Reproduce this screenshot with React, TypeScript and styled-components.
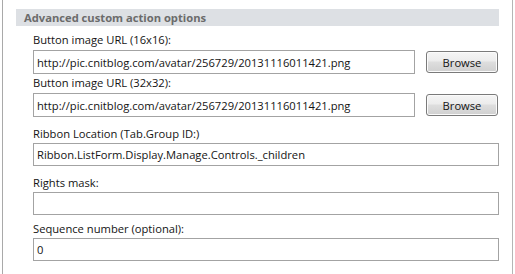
import React from "react";
import styled, { createGlobalStyle } from "styled-components";

const Global = createGlobalStyle`
  html, body { margin: 0; padding: 0; background: #ffffff; }
  body { font-family: "Open Sans", "Noto Sans", sans-serif; }
`;

const Page = styled.div`
  width: 515px;
  height: 274px;
  background: #ffffff;
  overflow: hidden;
`;

const Frame = styled.div`
  margin-left: 2px;
  width: 511px;
  height: 274px;
  border-left: 1px solid #a9a9a9;
  border-right: 1px solid #b5b5b5;
  padding-top: 9px;
  box-sizing: border-box;
`;

const Header = styled.div`
  margin: 0 13px;
  height: 17px;
  background: #dde0e4;
  color: #6b6b6b;
  font-weight: 700;
  font-size: 11.2px;
  line-height: 17px;
  padding-left: 8px;
`;

const Body = styled.div`
  padding-left: 30px;
  padding-right: 13px;
  display: flex;
  flex-direction: column;
`;

const Field = styled.div<{ $top: number; $gap: number }>`
  margin-top: ${(p) => p.$top}px;
  display: flex;
  flex-direction: column;
  gap: ${(p) => p.$gap}px;
`;

const Label = styled.div`
  font-size: 11.2px;
  line-height: 16px;
  height: 16px;
  color: #141414;
`;

const Row = styled.div`
  display: flex;
  align-items: center;
  gap: 11px;
`;

const TextBox = styled.div<{ $h: number; $w?: number }>`
  box-sizing: border-box;
  height: ${(p) => p.$h}px;
  width: ${(p) => (p.$w ? `${p.$w}px` : "100%")};
  border: 1px solid #a3a3a3;
  background: #ffffff;
  font-size: 11.2px;
  color: #141414;
  padding-left: 3px;
  display: flex;
  align-items: center;
  white-space: nowrap;
  overflow: hidden;
`;

const Button = styled.div`
  box-sizing: border-box;
  width: 72px;
  height: 22px;
  border: 1px solid #7a7a7a;
  border-radius: 3px;
  background: linear-gradient(#f5f5f5 0%, #ececec 45%, #dedede 50%, #d0d0d0 100%);
  box-shadow: inset 0 0 0 1px #fbfbfb;
  font-size: 11.2px;
  color: #141414;
  display: flex;
  align-items: center;
  justify-content: center;
`;

const url = "http://pic.cnitblog.com/avatar/256729/20131116011421.png";

export default function App() {
  return (
    <Page>
      <Global />
      <Frame>
        <Header>Advanced custom action options</Header>
        <Body>
          <Field $top={6} $gap={2}>
            <Label>Button image URL (16x16):</Label>
            <Row>
              <TextBox $h={24} $w={382}>{url}</TextBox>
              <Button>Browse</Button>
            </Row>
          </Field>
          <Field $top={1} $gap={2}>
            <Label>Button image URL (32x32):</Label>
            <Row>
              <TextBox $h={24} $w={382}>{url}</TextBox>
              <Button>Browse</Button>
            </Row>
          </Field>
          <Field $top={9} $gap={1}>
            <Label>Ribbon Location (Tab.Group ID:)</Label>
            <TextBox $h={23}>Ribbon.ListForm.Display.Manage.Controls._children</TextBox>
          </Field>
          <Field $top={9} $gap={1}>
            <Label>Rights mask:</Label>
            <TextBox $h={23}></TextBox>
          </Field>
          <Field $top={6} $gap={1}>
            <Label>Sequence number (optional):</Label>
            <TextBox $h={23}>0</TextBox>
          </Field>
        </Body>
      </Frame>
    </Page>
  );
}
